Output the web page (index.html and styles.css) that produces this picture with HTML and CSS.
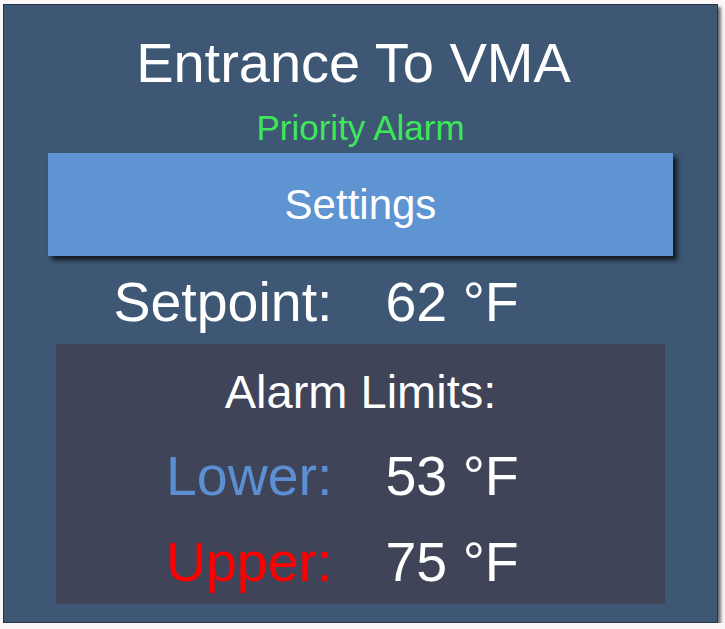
FILE: index.html
```html
<!DOCTYPE html>
<html>
<head>
<meta charset="utf-8">
<link rel="stylesheet" href="styles.css">
</head>
<body>
<div class="panel">
  <div class="title">Entrance To VMA</div>
  <div class="priority">Priority Alarm</div>
  <div class="settings">Settings</div>
  <div class="row setpoint">
    <div class="label">Setpoint:</div>
    <div class="value">62 °F</div>
  </div>
  <div class="limits">
    <div class="limits-title">Alarm Limits:</div>
    <div class="row limit">
      <div class="label lower">Lower:</div>
      <div class="value">53 °F</div>
    </div>
    <div class="row limit">
      <div class="label upper">Upper:</div>
      <div class="value">75 °F</div>
    </div>
  </div>
</div>
</body>
</html>
```
FILE: styles.css
```css
html, body {
  margin: 0;
  padding: 0;
  background: #fdf6f9;
}
body {
  padding: 4px 0 0 3px;
  font-family: "Liberation Sans", Arial, sans-serif;
  color: #ffffff;
}
.panel {
  box-sizing: border-box;
  width: 715px;
  height: 619px;
  background: #3d5774;
  border: 1px solid #23364a;
  box-shadow: 3px 3px 3px rgba(0, 0, 0, 0.55);
  padding-top: 26px;
  display: flex;
  flex-direction: column;
  align-items: stretch;
}
.title {
  font-size: 56px;
  line-height: 64px;
  text-align: center;
  padding-right: 14px;
}
.priority {
  margin-top: 13px;
  font-size: 35px;
  line-height: 40px;
  color: #3ee65a;
  text-align: center;
}
.settings {
  margin: 5px 44px 0 44px;
  height: 103px;
  background: #5f94d3;
  box-shadow: 4px 4px 5px rgba(0, 0, 0, 0.75);
  display: flex;
  align-items: center;
  justify-content: center;
  font-size: 42px;
}
.row {
  display: grid;
  grid-template-columns: 1fr 1fr;
  font-size: 55.5px;
}
.label {
  text-align: right;
  padding-right: 28px;
}
.value {
  text-align: left;
  padding-left: 25px;
}
.setpoint {
  margin-top: 14px;
  line-height: 64px;
}
.limits {
  margin: 10px 52px 0 52px;
  height: 260px;
  background: #3f4459;
  padding-top: 16px;
  box-sizing: border-box;
}
.limits-title {
  font-size: 47px;
  line-height: 64px;
  text-align: center;
  margin-bottom: 9px;
}
.limit {
  line-height: 86px;
  margin-left: -52px;
  margin-right: -52px;
}
.lower {
  color: #5b8fd2;
}
.upper {
  color: #ff0000;
}
```
